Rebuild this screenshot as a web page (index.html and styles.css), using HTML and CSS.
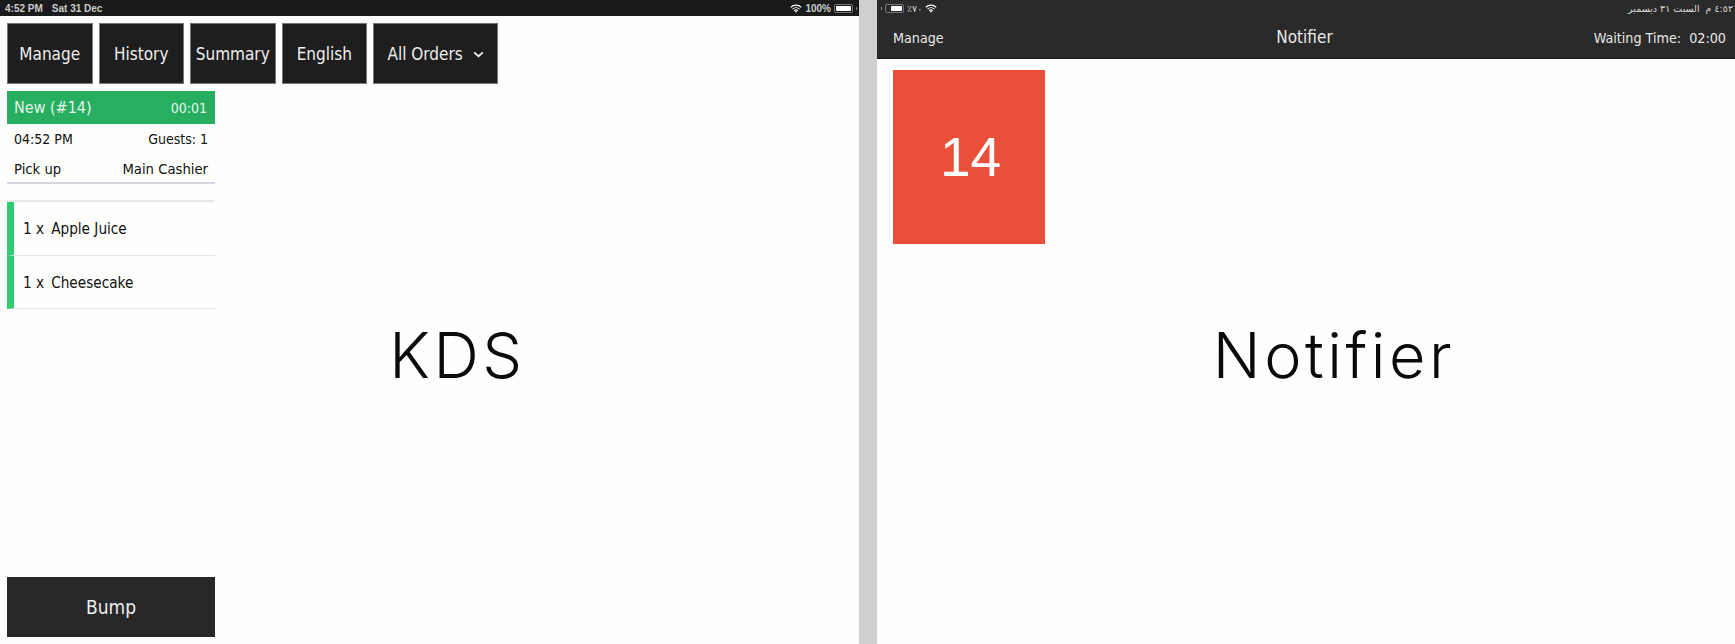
FILE: index.html
```html
<!DOCTYPE html>
<html lang="en">
<head>
<meta charset="utf-8">
<title>KDS and Notifier</title>
<link rel="stylesheet" href="styles.css">
</head>
<body>
<section class="pane kds">
  <div class="status">
    <span class="status-time">4:52 PM</span><span>Sat 31 Dec</span>
    <span class="status-right">
      <svg class="wifi" viewBox="0 0 14 10"><path d="M1 3.6a8.6 8.6 0 0 1 12 0M3 5.7a5.8 5.8 0 0 1 8 0M5 7.6a2.9 2.9 0 0 1 4 0" fill="none" stroke="#fff" stroke-width="1.4"/><path d="M7 10 5.7 8.6a1.9 1.9 0 0 1 2.6 0z" fill="#fff"/></svg>
      <span>100%</span>
      <span class="battery"><i class="battery-fill full"></i></span><i class="battery-tip"></i>
    </span>
  </div>
  <nav class="toolbar">
    <button class="tool">Manage</button>
    <button class="tool">History</button>
    <button class="tool">Summary</button>
    <button class="tool">English</button>
    <button class="tool tool-wide">All Orders
      <svg class="chevron" viewBox="0 0 10 6"><path d="M1 1l4 3.6L9 1" fill="none" stroke="#eee" stroke-width="1.6"/></svg>
    </button>
  </nav>
  <div class="ticket">
    <div class="ticket-head"><span>New (#14)</span><span class="timer">00:01</span></div>
    <div class="ticket-row first"><span>04:52 PM</span><span>Guests: 1</span></div>
    <div class="ticket-row second"><span>Pick up</span><span>Main Cashier</span></div>
    <ul class="items">
      <li class="item"><span>1 x</span><span>Apple Juice</span></li>
      <li class="item"><span>1 x</span><span>Cheesecake</span></li>
    </ul>
    <button class="bump">Bump</button>
  </div>
  <div class="big-label">KDS</div>
</section>
<div class="divider"></div>
<section class="pane notifier">
  <header class="notifier-head">
    <div class="status status-rtl">
      <span class="status-left">
        <i class="battery-tip"></i><span class="battery"><i class="battery-fill part"></i></span>
        <span class="arabic">٪٧٠</span>
        <svg class="wifi" viewBox="0 0 14 10"><path d="M1 3.6a8.6 8.6 0 0 1 12 0M3 5.7a5.8 5.8 0 0 1 8 0M5 7.6a2.9 2.9 0 0 1 4 0" fill="none" stroke="#fff" stroke-width="1.4"/><path d="M7 10 5.7 8.6a1.9 1.9 0 0 1 2.6 0z" fill="#fff"/></svg>
      </span>
      <span class="arabic" dir="rtl">٤:٥٢ م &nbsp;السبت ٣١ ديسمبر</span>
    </div>
    <div class="title-row">
      <span class="manage">Manage</span>
      <span class="title">Notifier</span>
      <span class="waiting">Waiting Time:&nbsp; 02:00</span>
    </div>
  </header>
  <div class="tile">14</div>
  <div class="big-label">Notifier</div>
</section>
</body>
</html>
```
FILE: styles.css
```css
* { box-sizing: border-box; }
html, body { margin: 0; height: 644px; overflow: hidden; }
body {
  display: flex;
  background: #fefefc;
  font-family: "DejaVu Sans Condensed", "DejaVu Sans", sans-serif;
  color: #111;
}
button { font-family: inherit; cursor: pointer; }
.pane { position: relative; display: flex; flex-direction: column; height: 644px; }
.kds { width: 859px; }
.notifier { width: 858px; }
.divider { width: 18px; background: #cfcfcf; }

.status {
  display: flex;
  align-items: center;
  height: 16px;
  padding: 0 2px 0 5px;
  background: #1b1b1b;
  color: #ccc;
  font: 700 10px "Liberation Sans", sans-serif;
}
.status-time { margin-right: 9px; }
.status-right { margin-left: auto; display: flex; align-items: center; gap: 3px; font-size: 10px; }
.wifi { width: 12px; height: 9px; }
.battery { display: block; width: 19px; height: 9px; border: 1px solid #777; border-radius: 2px; padding: 1px; }
.battery-fill { display: block; height: 100%; background: #fff; border-radius: 1px; }
.battery-fill.full { width: 100%; }
.battery-fill.part { width: 72%; margin-left: auto; }
.battery-tip { display: block; width: 1px; height: 3px; background: #888; }

.toolbar { display: flex; gap: 6px; padding: 7px 0 0 7px; }
.tool {
  width: 85.5px;
  height: 61px;
  padding: 0;
  border: 1px solid #777;
  border-radius: 0;
  background: #1e1e1e;
  color: #eee;
  font-size: 17px;
}
.tool-wide { width: 125px; }
.chevron { width: 11px; height: 7px; margin-left: 5px; vertical-align: 2px; }

.ticket { flex: 1; display: flex; flex-direction: column; width: 208px; margin: 7px 0 7px 7px; }
.ticket-head {
  display: flex;
  justify-content: space-between;
  align-items: center;
  height: 33px;
  padding: 0 8px 0 7px;
  background: #27ae60;
  color: #e4f5ea;
  font-size: 16px;
}
.timer { font-size: 14px; }
.ticket-row { display: flex; justify-content: space-between; padding: 0 7px; }
.ticket-row.first { height: 30px; align-items: center; font-size: 14px; }
.ticket-row.second { height: 30px; align-items: center; border-bottom: 2px solid #d6d6e0; font-size: 14.7px; }
.items { list-style: none; margin: 16px 0 0; padding: 0; border-top: 2px solid #e8e8e8; }
.item {
  display: flex;
  align-items: center;
  gap: 7px;
  height: 53.5px;
  padding: 2px 0 0 9px;
  border-left: 7px solid #2ecc71;
  border-bottom: 1px solid #e4e4e4;
  font-size: 15.2px;
}
.bump {
  margin-top: auto;
  height: 60px;
  border: 0;
  border-radius: 0;
  background: #282828;
  color: #eee;
  font-size: 19px;
}

.big-label {
  position: absolute;
  inset: 0;
  display: flex;
  align-items: center;
  justify-content: center;
  padding: 66px 0 0 56px;
  font-family: Inter, "Open Sans", sans-serif;
  font-weight: 300;
  font-size: 63px;
  letter-spacing: 3.5px;
  color: #0a0a0a;
  pointer-events: none;
}

.notifier-head { height: 59px; background: #2a2a2a; border-bottom: 1px solid #1a1a1a; }
.status-rtl { background: transparent; justify-content: space-between; padding: 0 2px 0 4px; }
.status-left { display: flex; align-items: center; gap: 3px; }
.arabic { font: 400 9.5px "DejaVu Sans", sans-serif; color: #ddd; }
.title-row {
  display: grid;
  grid-template-columns: 1fr auto 1fr;
  align-items: center;
  height: 42px;
  padding: 2px 9px 0 16px;
  color: #e8e8e8;
  font-size: 14.2px;
}
.title { font-size: 17px; margin: -2px 10px 0 0; }
.waiting { justify-self: end; }
.tile {
  display: flex;
  align-items: center;
  justify-content: center;
  width: 152px;
  height: 174px;
  margin: 11px 0 0 16px;
  padding-left: 3px;
  background: #ea4f39;
  color: #fff;
  font: 400 55px "Liberation Sans", sans-serif;
}
```
